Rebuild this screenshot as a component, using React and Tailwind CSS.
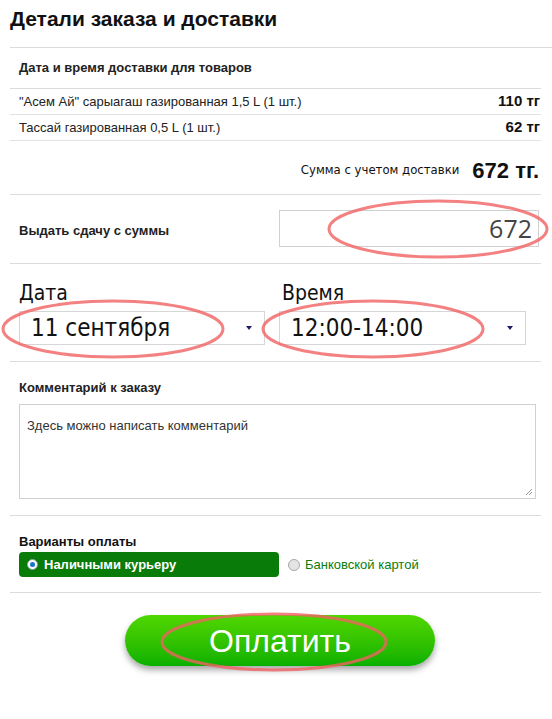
import React from 'react';

const Arrow = () => (
  <span className="w-0 h-0 border-l-[3px] border-r-[3px] border-t-[4px] border-l-transparent border-r-transparent border-t-[#1c1c6b]" />
);

const SelectBox = ({ value, width }) => (
  <div className={`${width} h-[34px] border border-[#d6d6d6] bg-white flex items-center justify-between pl-[11px] pr-[12px]`}>
    <span className="text-[24px] text-[#111] leading-none" style={{ fontFamily: '"DejaVu Sans Condensed", "DejaVu Sans", sans-serif' }}>{value}</span>
    <Arrow />
  </div>
);

const App = () => {
  const items = [
    { name: '"Асем Ай" сарыагаш газированная 1,5 L (1 шт.)', price: '110 тг' },
    { name: 'Тассай газированная 0,5 L (1 шт.)', price: '62 тг' },
  ];

  return (
    <div className="relative w-[552px] h-[719px] bg-white overflow-hidden pl-[10px]" style={{ fontFamily: '"Liberation Sans", Arial, sans-serif' }}>
      <div className="h-[48px] border-b border-[#dcdcdc] pt-[7px]">
        <h1 className="text-[21px] font-bold text-[#111] leading-[24px]">Детали заказа и доставки</h1>
      </div>

      <div className="w-[531px]">
        <div className="h-[41px] border-b border-[#dcdcdc] flex items-center pl-[9px]">
          <span className="text-[13px] font-bold text-[#222]">Дата и время доставки для товаров</span>
        </div>

        {items.map((it) => (
          <div key={it.price} className="h-[26px] border-b border-[#e2e2e2] flex items-center justify-between pl-[9px] pr-[1px]">
            <span className="text-[13px] text-[#222]">{it.name}</span>
            <span className="text-[15px] font-bold text-[#111]">{it.price}</span>
          </div>
        ))}

        <div className="h-[54px] border-b border-[#dcdcdc] flex items-center justify-end pt-[5px] pr-[2px] gap-[13px]">
          <span className="text-[13px] text-[#111]" style={{ fontFamily: '"DejaVu Sans Condensed", "DejaVu Sans", sans-serif' }}>Сумма с учетом доставки</span>
          <span className="text-[22px] font-bold text-[#111]">672 тг.</span>
        </div>

        <div className="h-[69px] border-b border-[#dcdcdc] flex items-start justify-between pt-[15px] pl-[9px] pr-[2px]">
          <span className="text-[13px] font-bold text-[#222] mt-[11px]">Выдать сдачу с суммы</span>
          <div className="w-[260px] h-[37px] border border-[#d0d0d0] flex items-center justify-end pr-[6px]">
            <span className="text-[25px] text-[#444] leading-none" style={{ fontFamily: '"Open Sans", sans-serif' }}>672</span>
          </div>
        </div>

        <div className="h-[98px] border-b border-[#dcdcdc] flex pl-[9px] pt-[17px] gap-[14px]">
          <div className="flex flex-col">
            <span className="text-[21px] text-[#111] leading-[24px] mb-[6px]" style={{ fontFamily: '"DejaVu Sans Condensed", "DejaVu Sans", sans-serif' }}>Дата</span>
            <SelectBox value="11 сентября" width="w-[246px]" />
          </div>
          <div className="flex flex-col">
            <span className="text-[21px] text-[#111] leading-[24px] mb-[6px] pl-[3px]" style={{ fontFamily: '"DejaVu Sans Condensed", "DejaVu Sans", sans-serif' }}>Время</span>
            <SelectBox value="12:00-14:00" width="w-[247px]" />
          </div>
        </div>

        <div className="h-[154px] border-b border-[#dcdcdc] pl-[9px] pt-[18px]">
          <div className="text-[13px] font-bold text-[#222] leading-[15px]">Комментарий к заказу</div>
          <div className="relative mt-[9px] w-[517px] h-[95px] border border-[#d0d0d0] px-[7px] pt-[8px]">
            <span className="text-[13px] text-[#333]">Здесь можно написать комментарий</span>
            <svg className="absolute right-[2px] bottom-[2px]" width="8" height="8" viewBox="0 0 8 8">
              <path d="M7 1L1 7M7 4L4 7" stroke="#999" strokeWidth="1" />
            </svg>
          </div>
        </div>

        <div className="h-[77px] border-b border-[#dcdcdc] pl-[9px] pt-[18px]">
          <div className="text-[13px] font-bold text-[#111] leading-[15px]">Варианты оплаты</div>
          <div className="flex items-center mt-[3px]">
            <div className="w-[260px] h-[25px] bg-[#097b09] rounded-[4px] flex items-center pl-[8px] gap-[6px]">
              <span className="w-[11px] h-[11px] rounded-full bg-white border border-[#8a9aa8] flex items-center justify-center">
                <span className="w-[5px] h-[5px] rounded-full bg-[#1a73c8]" />
              </span>
              <span className="text-[13px] font-bold text-white">Наличными курьеру</span>
            </div>
            <span className="ml-[9px] w-[12px] h-[12px] rounded-full bg-[#e4e4e4] border border-[#a8a8a8]" />
            <span className="ml-[5px] text-[13px] text-[#0a7d0a]">Банковской картой</span>
          </div>
        </div>

        <div className="flex justify-center pt-[22px] pl-[9px]">
          <button className="w-[310px] h-[51px] rounded-full bg-gradient-to-b from-[#4fd700] to-[#05b000] text-white text-[32px] leading-none shadow-[0_4px_6px_rgba(0,0,0,0.35)]">
            Оплатить
          </button>
        </div>
      </div>

      <svg className="absolute left-0 top-0 pointer-events-none" width="552" height="719">
        <g fill="none" stroke="#f06262" strokeOpacity="0.8" strokeWidth="3">
          <ellipse cx="438" cy="229" rx="109" ry="28" />
          <ellipse cx="113" cy="329" rx="110" ry="28" />
          <ellipse cx="373" cy="329" rx="110" ry="28" />
          <ellipse cx="274" cy="642" rx="112" ry="28" />
        </g>
      </svg>
    </div>
  );
};

export default App;
